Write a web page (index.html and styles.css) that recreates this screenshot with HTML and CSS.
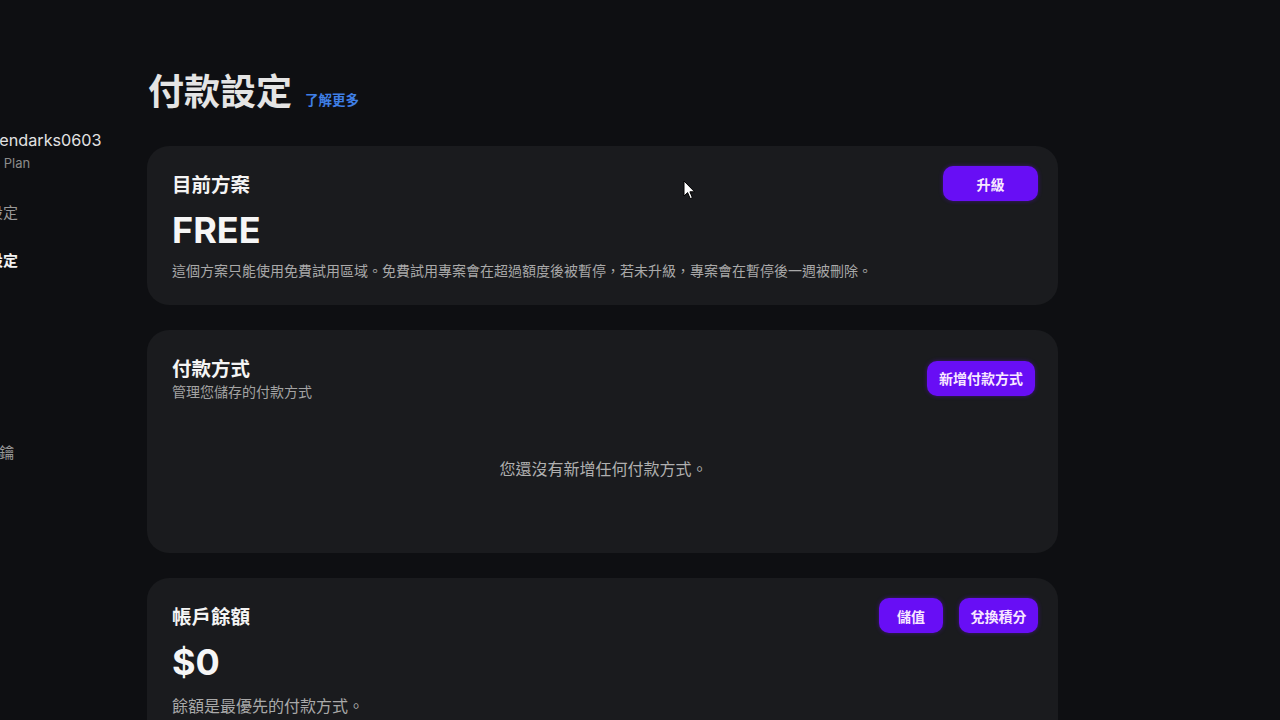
FILE: index.html
```html
<!DOCTYPE html>
<html lang="zh-Hant">
<head>
<meta charset="utf-8">
<title>付款設定</title>
<link rel="stylesheet" href="styles.css">
</head>
<body>
<aside class="sidebar">
  <div class="profile">
    <div class="username">legendarks0603</div>
    <div class="plan">Free Plan</div>
  </div>
  <nav class="nav">
    <div class="nav-item">一般設定</div>
    <div class="nav-item active">付款設定</div>
    <div class="nav-item hidden-item">用量</div>
    <div class="nav-item hidden-item">成員</div>
    <div class="nav-item hidden-item">專案</div>
    <div class="nav-item">API 金鑰</div>
  </nav>
</aside>
<main class="main">
  <header class="page-head">
    <h1 class="page-title">付款設定</h1>
    <a class="learn-more" href="#">了解更多</a>
  </header>

  <section class="card card-plan">
    <div class="card-row">
      <h2 class="card-title">目前方案</h2>
      <button class="btn btn-upgrade">升級</button>
    </div>
    <div class="big-value">FREE</div>
    <p class="card-desc">這個方案只能使用免費試用區域。免費試用專案會在超過額度後被暫停，若未升級，專案會在暫停後一週被刪除。</p>
  </section>

  <section class="card card-methods">
    <div class="card-row card-row-methods">
      <div class="title-block">
        <h2 class="card-title">付款方式</h2>
        <div class="card-sub">管理您儲存的付款方式</div>
      </div>
      <button class="btn btn-add">新增付款方式</button>
    </div>
    <div class="empty">您還沒有新增任何付款方式。</div>
  </section>

  <section class="card card-balance">
    <div class="card-row">
      <h2 class="card-title">帳戶餘額</h2>
      <div class="btn-group">
        <button class="btn btn-topup">儲值</button>
        <button class="btn btn-redeem">兌換積分</button>
      </div>
    </div>
    <div class="big-value">$0</div>
    <p class="card-desc card-desc-lg">餘額是最優先的付款方式。</p>
  </section>
</main>
<svg class="cursor" width="13" height="20" viewBox="0 0 13 20" aria-hidden="true">
  <path d="M1 1 L1 16 L4.6 12.6 L7.2 18.6 L9.4 17.7 L6.9 11.8 L11.6 11.8 Z" fill="#ffffff" stroke="#000000" stroke-width="1" stroke-linejoin="round"/>
</svg>
</body>
</html>
```
FILE: styles.css
```css
html, body {
  margin: 0;
  padding: 0;
  background: #0e0f12;
  height: 100%;
  overflow: hidden;
}
body {
  display: flex;
  font-family: "Inter", "Noto Sans CJK TC", sans-serif;
  color: #e6e6e6;
  position: relative;
}
.sidebar {
  width: 147px;
  flex: none;
  padding-top: 128px;
}
.profile {
  margin-left: -27px;
}
.username {
  margin-left: 3px;
  font-size: 16.2px;
  line-height: 24px;
  color: #e2e2e2;
  white-space: nowrap;
}
.plan {
  margin-top: 2px;
  font-size: 13px;
  line-height: 18px;
  color: #8c8c8c;
  white-space: nowrap;
}
.nav {
  margin-top: 15px;
  margin-left: -42px;
  display: flex;
  flex-direction: column;
}
.nav-item {
  height: 48px;
  display: flex;
  align-items: center;
  font-family: "Noto Sans CJK TC", sans-serif;
  font-size: 15px;
  color: #9a9a9a;
  white-space: nowrap;
}
.nav-item.active {
  color: #f2f2f2;
  font-weight: 700;
}
.hidden-item {
  margin-left: -40px;
}
.main {
  width: 911px;
  flex: none;
  padding-top: 67px;
}
.page-head {
  display: flex;
  align-items: baseline;
  gap: 13px;
  margin-bottom: 35px;
  padding-left: 1px;
}
.page-title {
  margin: 0;
  font-family: "Noto Sans CJK TC", sans-serif;
  font-size: 36px;
  line-height: 44px;
  font-weight: 700;
  color: #e4e4e4;
}
.learn-more {
  font-family: "Noto Sans CJK TC", sans-serif;
  font-size: 13.5px;
  font-weight: 700;
  color: #3f7fe6;
  text-decoration: none;
}
.card {
  background: #1a1b1e;
  border-radius: 22px;
  margin-bottom: 25px;
}
.card-plan {
  padding: 20px 20px 25px 25px;
}
.card-methods {
  padding: 25px 23px 0 25px;
}
.card-balance {
  padding: 20px 20px 30px 25px;
}
.card-row {
  display: flex;
  align-items: center;
  justify-content: space-between;
}
.title-block {
  display: flex;
  flex-direction: column;
}
.card-title {
  margin: 0;
  font-family: "Noto Sans CJK TC", sans-serif;
  font-size: 19.5px;
  line-height: 26px;
  font-weight: 700;
  color: #f4f4f4;
}
.card-sub {
  font-family: "Noto Sans CJK TC", sans-serif;
  font-size: 14px;
  line-height: 20px;
  color: #a3a3a3;
}
.big-value {
  margin-top: 7px;
  font-family: "Inter", sans-serif;
  font-size: 36px;
  line-height: 44px;
  font-weight: 700;
  color: #f6f6f6;
}
.card-desc {
  margin: 8px 0 0;
  font-family: "Noto Sans CJK TC", sans-serif;
  font-size: 14px;
  line-height: 20px;
  color: #a9a9a9;
}
.card-desc-lg {
  margin-top: 11px;
  font-size: 16px;
}
.empty {
  padding: 56px 0 74px;
  text-align: center;
  font-family: "Noto Sans CJK TC", sans-serif;
  font-size: 16px;
  line-height: 22px;
  color: #b0b0b0;
}
.btn-group {
  display: flex;
  gap: 16px;
}
.btn {
  height: 35px;
  border: none;
  border-radius: 10px;
  background: #680ef5;
  color: #f8e8ff;
  font-family: "Noto Sans CJK TC", sans-serif;
  font-size: 14px;
  font-weight: 700;
  padding: 0;
  box-shadow: 0 0 4px rgba(104, 14, 245, 0.45);
}
.btn-upgrade { width: 95px; }
.btn-add { width: 108px; }
.btn-topup { width: 64px; }
.btn-redeem { width: 79px; }
.cursor {
  position: absolute;
  left: 683px;
  top: 180px;
}
```
